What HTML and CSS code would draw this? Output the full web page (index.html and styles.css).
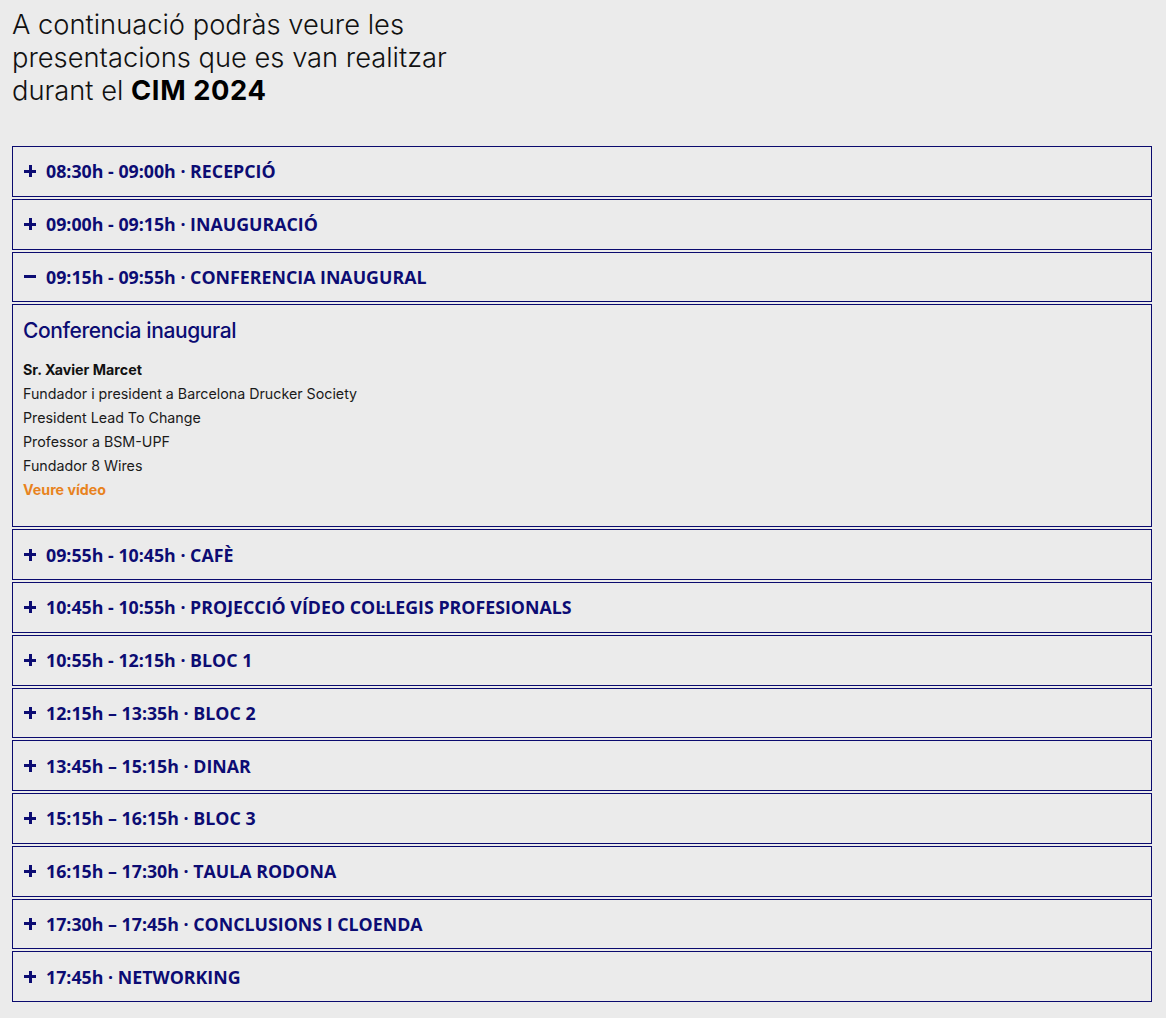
FILE: index.html
```html
<!DOCTYPE html>
<html lang="ca">
<head>
<meta charset="utf-8">
<link rel="stylesheet" href="styles.css">
</head>
<body>
<div class="page">
  <h2 class="intro">A continuació podràs veure les<br>presentacions que es van realitzar<br>durant el <strong>CIM 2024</strong></h2>
  <div class="accordion">
    <div class="item"><div class="head"><span class="icon plus"></span>08:30h - 09:00h · RECEPCIÓ</div></div>
    <div class="item"><div class="head"><span class="icon plus"></span>09:00h - 09:15h · INAUGURACIÓ</div></div>
    <div class="item open"><div class="head"><span class="icon minus"></span>09:15h - 09:55h · CONFERENCIA INAUGURAL</div></div>
    <div class="panel">
      <h3 class="panel-title">Conferencia inaugural</h3>
      <p class="panel-text"><strong>Sr. Xavier Marcet</strong><br>Fundador i president a Barcelona Drucker Society<br>President Lead To Change<br>Professor a BSM-UPF<br>Fundador 8 Wires<br><a class="video" href="#">Veure vídeo</a></p>
    </div>
    <div class="item"><div class="head"><span class="icon plus"></span>09:55h - 10:45h · CAFÈ</div></div>
    <div class="item"><div class="head"><span class="icon plus"></span>10:45h - 10:55h · PROJECCIÓ VÍDEO COL·LEGIS PROFESIONALS</div></div>
    <div class="item"><div class="head"><span class="icon plus"></span>10:55h - 12:15h · BLOC 1</div></div>
    <div class="item"><div class="head"><span class="icon plus"></span>12:15h – 13:35h · BLOC 2</div></div>
    <div class="item"><div class="head"><span class="icon plus"></span>13:45h – 15:15h · DINAR</div></div>
    <div class="item"><div class="head"><span class="icon plus"></span>15:15h – 16:15h · BLOC 3</div></div>
    <div class="item"><div class="head"><span class="icon plus"></span>16:15h – 17:30h · TAULA RODONA</div></div>
    <div class="item"><div class="head"><span class="icon plus"></span>17:30h – 17:45h · CONCLUSIONS I CLOENDA</div></div>
    <div class="item"><div class="head"><span class="icon plus"></span>17:45h · NETWORKING</div></div>
  </div>
</div>
</body>
</html>
```
FILE: styles.css
```css
html, body {
  margin: 0;
  padding: 0;
  background: #ebebeb;
}
.page {
  padding: 8px 14px 0 12px;
}
.intro {
  margin: 0 0 39px 0;
  font-family: Inter, "Liberation Sans", sans-serif;
  font-weight: 300;
  font-size: 27.3px;
  line-height: 33px;
  color: #111;
}
.intro strong {
  font-weight: 700;
  letter-spacing: 0.6px;
  color: #000;
}
.accordion {
  display: flex;
  flex-direction: column;
  gap: 2px;
}
.item, .panel {
  border: 1px solid #0a0a6e;
}
.head {
  height: 48.75px;
  display: flex;
  align-items: center;
  padding-left: 11px;
  font-family: "Open Sans", "Noto Sans", sans-serif;
  font-weight: 700;
  font-size: 17.8px;
  color: #0c0c73;
}
.icon {
  position: relative;
  width: 12px;
  height: 12px;
  margin-right: 10px;
  flex: none;
}
.icon::before, .icon::after {
  content: "";
  position: absolute;
  background: #0c0c73;
}
.icon::before {
  left: 0;
  top: 4.5px;
  width: 12px;
  height: 3px;
}
.plus::after {
  left: 4.5px;
  top: 0;
  width: 3px;
  height: 12px;
}
.minus::after {
  display: none;
}
.panel {
  padding: 13px 10px 0 10px;
  box-sizing: border-box;
  height: 223px;
}
.panel-title {
  margin: 0 0 14px 0;
  font-family: Inter, "Liberation Sans", sans-serif;
  font-weight: 500;
  font-size: 21px;
  line-height: 26px;
  color: #0c0c73;
  letter-spacing: -0.4px;
}
.panel-text {
  margin: 0;
  font-family: Inter, "Liberation Sans", sans-serif;
  font-size: 14.25px;
  line-height: 24px;
  color: #1a1a1a;
}
.panel-text strong {
  font-weight: 700;
  color: #111;
}
.video {
  color: #e8831e;
  font-weight: 700;
  text-decoration: none;
}
```
